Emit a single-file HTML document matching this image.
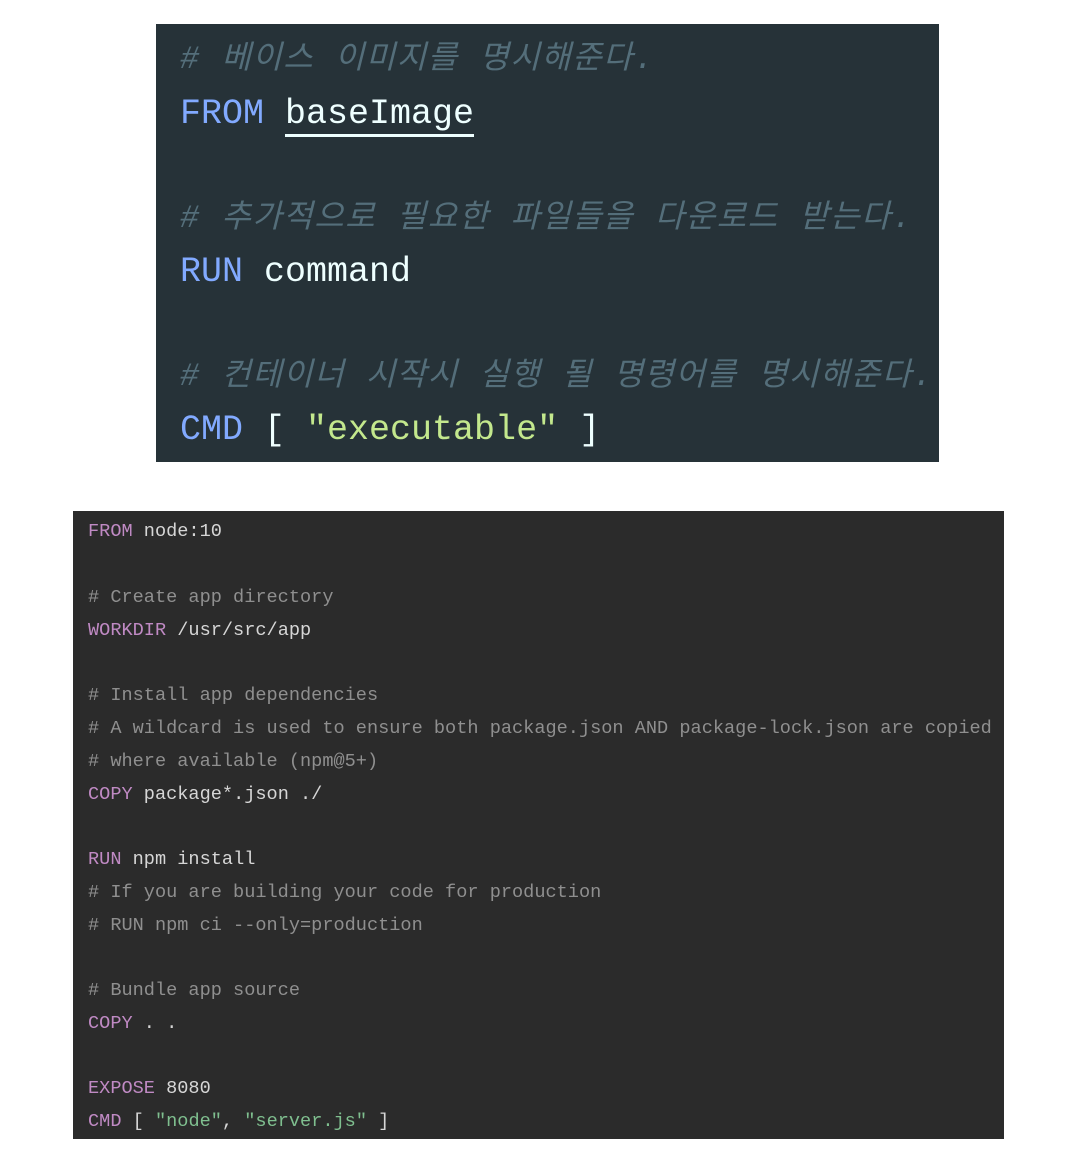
<!DOCTYPE html>
<html><head><meta charset="utf-8"><style>
body{margin:0;background:#fff;width:1074px;height:1166px;position:relative;overflow:hidden}
.a{position:absolute;left:156px;top:24px;width:783px;height:438px;background:#263238;font-family:"Liberation Mono","Noto Sans CJK KR",monospace;font-size:35px;color:#eeffff}
.a div{position:absolute;left:180px;white-space:pre;line-height:40px}
.a .c{color:#546e7a;font-style:italic;font-size:32px;letter-spacing:1.5px}
.k{color:#82aaff}.s{color:#c3e88d}
.b{position:absolute;left:73px;top:511px;width:931px;height:628px;background:#2b2b2b;font-family:"Liberation Mono",monospace;font-size:18.6px;color:#d6d6d6}
.b div{position:absolute;left:88px;white-space:pre;line-height:24px}
.b .c{color:#8f8f8f}
.p{color:#c08ac4}.g{color:#7fbf8f}
</style></head><body>
<div class="a">
<div class="c" style="left:24px;top:16px"># 베이스 이미지를 명시해준다.</div>
<div style="left:24px;top:70px"><span class="k">FROM</span> <span style="border-bottom:3px solid #eeffff">baseImage</span></div>
<div class="c" style="left:24px;top:175px"># 추가적으로 필요한 파일들을 다운로드 받는다.</div>
<div style="left:24px;top:228px"><span class="k">RUN</span> command</div>
<div class="c" style="left:24px;top:333px"># 컨테이너 시작시 실행 될 명령어를 명시해준다.</div>
<div style="left:24px;top:386px"><span class="k">CMD</span> [ <span class="s">"executable"</span> ]</div>
</div>
<div class="b">
<div style="left:15px;top:9px"><span class="p">FROM</span> node:10</div>
<div class="c" style="left:15px;top:75px"># Create app directory</div>
<div style="left:15px;top:108px"><span class="p">WORKDIR</span> /usr/src/app</div>
<div class="c" style="left:15px;top:173px"># Install app dependencies</div>
<div class="c" style="left:15px;top:206px"># A wildcard is used to ensure both package.json AND package-lock.json are copied</div>
<div class="c" style="left:15px;top:239px"># where available (npm@5+)</div>
<div style="left:15px;top:272px"><span class="p">COPY</span> package*.json ./</div>
<div style="left:15px;top:337px"><span class="p">RUN</span> npm install</div>
<div class="c" style="left:15px;top:370px"># If you are building your code for production</div>
<div class="c" style="left:15px;top:403px"># RUN npm ci --only=production</div>
<div class="c" style="left:15px;top:468px"># Bundle app source</div>
<div style="left:15px;top:501px"><span class="p">COPY</span> . .</div>
<div style="left:15px;top:566px"><span class="p">EXPOSE</span> 8080</div>
<div style="left:15px;top:599px"><span class="p">CMD</span> [ <span class="g">"node"</span>, <span class="g">"server.js"</span> ]</div>
</div>
</body></html>
